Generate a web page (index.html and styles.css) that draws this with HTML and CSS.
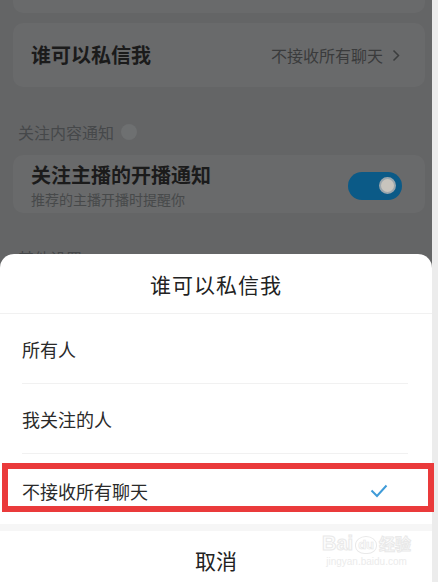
FILE: index.html
```html
<!DOCTYPE html>
<html lang="zh">
<head>
<meta charset="utf-8">
<link rel="stylesheet" href="styles.css">
</head>
<body>
<div class="frame">
  <div class="screen">
    <div class="settings">
      <div class="card card-prev"></div>
      <div class="card card-row">
        <span class="row-title">谁可以私信我</span>
        <span class="row-value">不接收所有聊天
          <svg class="chev" width="8" height="13" viewBox="0 0 8 13"><path d="M1.5 1.5 L6.5 6.5 L1.5 11.5" fill="none" stroke="#3c3d3e" stroke-width="1.5"/></svg>
        </span>
      </div>
      <div class="section-label">关注内容通知 <span class="info"></span></div>
      <div class="card card-row card-notify">
        <div class="notify-text">
          <div class="row-title">关注主播的开播通知</div>
          <div class="row-sub">推荐的主播开播时提醒你</div>
        </div>
        <div class="toggle"><span class="knob"></span></div>
      </div>
      <div class="section-label">其他设置</div>
    </div>

    <div class="sheet">
      <div class="sheet-title">谁可以私信我</div>
      <div class="options">
        <div class="option">所有人</div>
        <div class="option">我关注的人</div>
        <div class="option selected">不接收所有聊天
          <svg class="check" width="18" height="14" viewBox="0 0 18 14"><path d="M1.5 6.5 L7 12 L16.5 1.5" fill="none" stroke="#3f9bd8" stroke-width="2"/></svg>
        </div>
      </div>
      <div class="sheet-gap"></div>
      <div class="cancel">取消</div>
      <div class="watermark">
        <div class="wm-top"><span class="wm-bai">Bai</span><span class="wm-du">du</span><span class="wm-jy">经验</span></div>
        <div class="wm-url">jingyan.baidu.com</div>
      </div>
    </div>
  </div>
  <div class="highlight"></div>
</div>
</body>
</html>
```

FILE: styles.css
```css
* { box-sizing: border-box; }
html, body {
  margin: 0;
  padding: 0;
  width: 438px;
  height: 582px;
  overflow: hidden;
  background: #ececec;
  font-family: "Noto Sans CJK SC", "Noto Sans", sans-serif;
}
.frame {
  position: relative;
  width: 438px;
  height: 582px;
}
.screen {
  position: relative;
  width: 432px;
  height: 582px;
  background: #646566;
  overflow: hidden;
}
.settings {
  display: flex;
  flex-direction: column;
  padding: 0 7px 0 13px;
}
.card {
  background: #696a6b;
  border-radius: 10px;
}
.card-prev {
  height: 13px;
  border-radius: 0 0 10px 10px;
  margin-bottom: 10px;
}
.card-row {
  display: flex;
  align-items: center;
  justify-content: space-between;
  height: 64px;
  padding: 0 25px 0 18px;
}
.row-title {
  font-size: 20px;
  font-weight: 700;
  color: #1b1b1b;
  line-height: 24px;
}
.row-value {
  display: flex;
  align-items: center;
  gap: 9px;
  font-size: 16px;
  color: #3a3b3c;
}
.section-label {
  display: flex;
  align-items: center;
  gap: 7px;
  margin: 35px 0 0 5px;
  height: 20px;
  font-size: 16px;
  color: #46484a;
}
.info {
  width: 16px;
  height: 16px;
  border-radius: 50%;
  background: #6e7071;
}
.card-notify {
  margin-top: 13px;
  height: 58px;
  padding: 8px 23px 5px 18px;
}
.notify-text {
  display: flex;
  flex-direction: column;
  gap: 3px;
}
.row-sub {
  font-size: 14px;
  line-height: 18px;
  color: #47494a;
}
.toggle {
  width: 54px;
  height: 28px;
  border-radius: 14px;
  background: #0b5a87;
  display: flex;
  align-items: center;
  justify-content: flex-end;
  padding-right: 6px;
}
.knob {
  width: 17px;
  height: 17px;
  border-radius: 50%;
  background: #c8c4bd;
  border: 2px solid #9aa6ad;
}
.sheet {
  position: absolute;
  left: 0;
  top: 254px;
  width: 432px;
  bottom: 0;
  background: #fff;
  border-radius: 14px 14px 0 0;
  display: flex;
  flex-direction: column;
}
.sheet-title {
  height: 60px;
  flex-shrink: 0;
  display: flex;
  align-items: center;
  justify-content: center;
  font-size: 21px;
  letter-spacing: 1px;
  color: #222;
  border-bottom: 1px solid #f1f1f1;
}
.options {
  display: flex;
  flex-direction: column;
  flex-shrink: 0;
}
.option {
  height: 70px;
  margin: 0 24px 0 22px;
  display: flex;
  align-items: center;
  justify-content: space-between;
  font-size: 18px;
  color: #2a2a2a;
  border-bottom: 1px solid #f1f1f1;
}
.option.selected {
  border-bottom: none;
  padding-top: 4px;
}
.check {
  margin-right: 20px;
}
.sheet-gap {
  height: 7px;
  flex-shrink: 0;
  background: #f6f6f6;
}
.cancel {
  height: 58px;
  flex-shrink: 0;
  display: flex;
  align-items: center;
  justify-content: center;
  font-size: 21px;
  color: #222;
}
.watermark {
  position: absolute;
  left: 322px;
  top: 278px;
  display: flex;
  flex-direction: column;
  align-items: center;
  font-family: "Liberation Sans", sans-serif;
}
.wm-top {
  display: flex;
  align-items: flex-end;
  gap: 2px;
  font-size: 20px;
  font-weight: 700;
  line-height: 22px;
}
.wm-bai, .wm-jy {
  color: #fdfdfd;
  -webkit-text-stroke: 1px #e9e9e9;
}
.wm-jy {
  font-family: "Noto Sans CJK SC", sans-serif;
  font-size: 16px;
}
.wm-du {
  font-size: 13px;
  color: #fdfdfd;
  -webkit-text-stroke: 0.6px #e6e6e6;
  border: 1px solid #e9e9e9;
  border-radius: 50% 50% 45% 45%;
  padding: 0 2px;
  line-height: 16px;
}
.wm-url {
  font-size: 10px;
  color: #ebebeb;
  margin-top: 2px;
}
.highlight {
  position: absolute;
  left: 2px;
  top: 463px;
  width: 432px;
  height: 49px;
  border: 6px solid #ea3a3b;
}
```
